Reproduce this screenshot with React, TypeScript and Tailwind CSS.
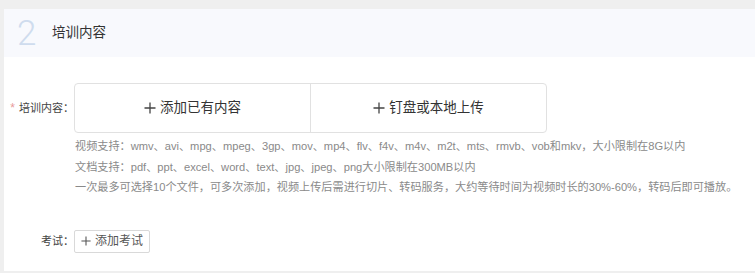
import React from "react";

const font = { fontFamily: '"Liberation Sans", "Noto Sans CJK SC", sans-serif' };

function Plus({ size, cls }: { size: number; cls: string }) {
  return (
    <svg width={size} height={size} viewBox="0 0 12 12" className={cls}>
      <path d="M6 0.5V11.5M0.5 6H11.5" stroke="currentColor" strokeWidth="1.3" fill="none" />
    </svg>
  );
}

export default function App() {
  return (
    <div className="w-[755px] h-[273px] bg-[#efefef] pt-[9px] pl-[4px] overflow-hidden" style={font}>
      <div className="bg-white h-[262px] flex flex-col">
        <div className="h-[48px] bg-[#f8f9fd] flex items-center pl-[13px]">
          <span
            className="text-[35px] leading-none font-light text-[#cfdcee] w-[35px]"
            style={{ fontFamily: 'Roboto, "Liberation Sans", sans-serif' }}
          >
            2
          </span>
          <span className="text-[13.5px] text-[#333]">培训内容</span>
        </div>

        <div className="flex mt-[26px]">
          <div className="w-[70px] shrink-0 h-[50px] flex items-center justify-end text-[11px] text-[#444] whitespace-nowrap">
            <span className="text-[#e89a9a] mr-[4px] text-[12px]">*</span>
            <span>培训内容：</span>
          </div>
          <div className="flex flex-col">
            <div className="w-[473px] h-[50px] border border-[#e1e1e1] rounded-[4px] flex">
              <div className="w-[236px] flex items-center justify-center text-[13.5px] text-[#333] border-r border-[#e1e1e1]">
                <Plus size={12} cls="mr-[4px] text-[#444]" />
                添加已有内容
              </div>
              <div className="flex-1 flex items-center justify-center text-[13.5px] text-[#333]">
                <Plus size={12} cls="mr-[4px] text-[#444]" />
                钉盘或本地上传
              </div>
            </div>
            <div className="mt-[3px] pl-[1px] text-[11.15px] leading-[20.5px] text-[#8a8a8a] whitespace-nowrap">
              <div>视频支持：wmv、avi、mpg、mpeg、3gp、mov、mp4、flv、f4v、m4v、m2t、mts、rmvb、vob和mkv，大小限制在8G以内</div>
              <div>文档支持：pdf、ppt、excel、word、text、jpg、jpeg、png大小限制在300MB以内</div>
              <div>一次最多可选择10个文件，可多次添加，视频上传后需进行切片、转码服务，大约等待时间为视频时长的30%-60%，转码后即可播放。</div>
            </div>
          </div>
        </div>

        <div className="flex mt-[32px] items-center">
          <div className="w-[70px] shrink-0 text-right text-[11px] text-[#444] whitespace-nowrap">考试：</div>
          <div className="w-[76px] h-[23px] border border-[#d9d9d9] rounded-[2px] flex items-center justify-center text-[12px] text-[#555]">
            <Plus size={10} cls="mr-[4px] text-[#555]" />
            添加考试
          </div>
        </div>
      </div>
    </div>
  );
}
